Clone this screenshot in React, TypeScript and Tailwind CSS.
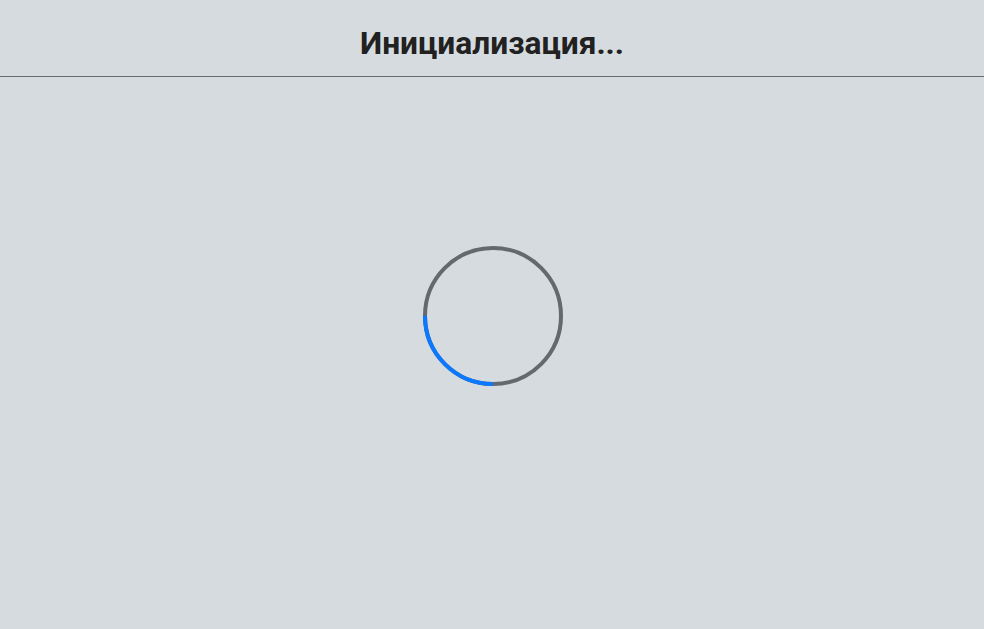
export default function App() {
  const r = 68;
  const c = 2 * Math.PI * r;

  return (
    <div className="min-h-screen bg-[#d6dbdf] font-['Roboto',sans-serif]">
      <header className="box-border flex h-[77px] items-center justify-center border-b border-[#6b6b6b] pt-[11px]">
        <h1 className="text-[31.7px] font-bold leading-[38px] text-[#212121]">Инициализация...</h1>
      </header>
      <main className="flex justify-center pl-[2px] pt-[169px]">
        <svg width="140" height="140" viewBox="0 0 140 140">
          <circle cx="70" cy="70" r={r} fill="none" stroke="#65696c" strokeWidth="4" />
          {/* blue arc: 9 o'clock down to 6 o'clock */}
          <circle
            cx="70"
            cy="70"
            r={r}
            fill="none"
            stroke="#0a78ff"
            strokeWidth="4"
            strokeDasharray={`${c / 4} ${c}`}
            transform="rotate(90 70 70)"
          />
        </svg>
      </main>
    </div>
  );
}
